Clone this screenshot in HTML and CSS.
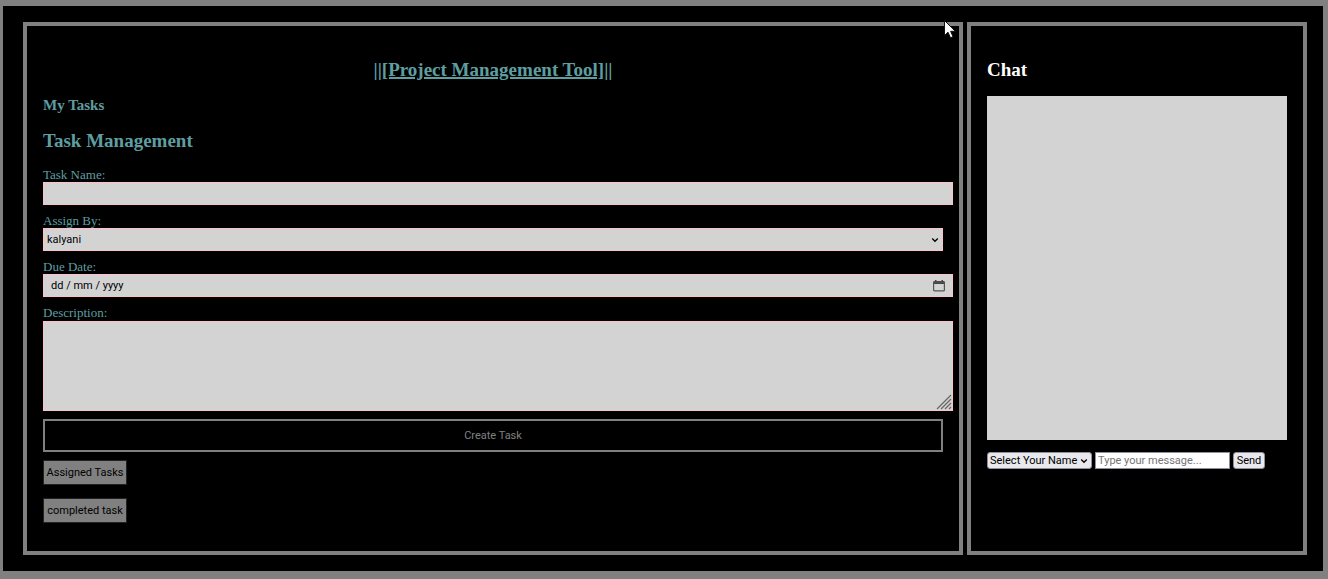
FILE: index.html
```html
<!DOCTYPE html>
<html lang="en-GB">
<head>
<meta charset="utf-8">
<title>Project Management Tool</title>
<link rel="stylesheet" href="styles.css">
</head>
<body>
<div class="app">
  <main class="panel">
    <h1 class="title">||<a href="#">[Project Management Tool]</a>||</h1>
    <h3 class="subtitle">My Tasks</h3>
    <h2 class="heading">Task Management</h2>
    <form class="task-form">
      <div class="field">
        <label for="task-name">Task Name:</label>
        <input class="control wide" id="task-name" type="text">
      </div>
      <div class="field">
        <label for="assign-by">Assign By:</label>
        <div class="control-wrap">
          <select class="control" id="assign-by"><option>kalyani</option></select>
          <svg class="chevron" viewBox="0 0 8 8" aria-hidden="true"><path d="M1.2 2.5 4 5.3 6.8 2.5"/></svg>
        </div>
      </div>
      <div class="field">
        <label for="due-date">Due Date:</label>
        <div class="control-wrap wide">
          <input class="control date" id="due-date" type="text" value="dd / mm / yyyy">
          <button class="calendar" type="button" aria-label="Open calendar">
            <svg viewBox="0 0 12 12"><path class="fill" d="M2 0h1.500v1h5V0H10v1h.5A1.500 1.500 0 0 1 12 2.500V4H0V2.500A1.500 1.500 0 0 1 1.500 1H2z"/><rect class="line" x=".6" y="2" width="10.800" height="8.900" rx="1"/></svg>
          </button>
        </div>
      </div>
      <div class="field description">
        <label for="description">Description:</label>
        <div class="control-wrap wide">
          <textarea class="control area" id="description"></textarea>
          <svg class="grip" viewBox="0 0 16 16" aria-hidden="true"><path d="M1 15 15 1M5 15 15 5M9 15l6-6M13 15l2-2"/></svg>
        </div>
      </div>
      <button class="create" type="button">Create Task</button>
    </form>
    <div class="links">
      <button class="gray-button" type="button">Assigned Tasks</button>
      <button class="gray-button" type="button">completed task</button>
    </div>
  </main>
  <aside class="panel chat">
    <h2 class="heading">Chat</h2>
    <div class="messages"></div>
    <form class="composer">
      <div class="control-wrap name">
        <select class="mini" aria-label="Your name"><option>Select Your Name</option></select>
        <svg class="chevron" viewBox="0 0 8 8" aria-hidden="true"><path d="M1.200 2.500 4 5.300 6.800 2.500"/></svg>
      </div>
      <input class="message" type="text" placeholder="Type your message..." aria-label="Message">
      <button class="mini send" type="button">Send</button>
    </form>
  </aside>
</div>
<svg class="cursor" viewBox="0 0 12 19" aria-hidden="true"><path d="M.5.5v15l3.500-3.300 2.500 5.600 2.500-1.100-2.400-5.400h4.700z"/></svg>
</body>
</html>
```
FILE: styles.css
```css
* { box-sizing: border-box; }
body {
  margin: 0;
  padding: 6px 5px 8px 3px;
  min-height: 100vh;
  display: flex;
  background: #808080;
  color: #5f9ea0;
  font-family: "Liberation Serif", serif;
  font-size: 13px;
  line-height: 15px;
}
h1, h2, h3 { margin: 0; }
button, input, select, textarea {
  margin: 0;
  font-family: Roboto, sans-serif;
  font-size: 11px;
  line-height: 15px;
}
.app {
  flex: 1;
  display: grid;
  grid-template-columns: minmax(0, 1fr) 340px;
  gap: 4px;
  padding: 16px 16px 16px 20px;
  background: #000;
}
.panel { border: 4px solid #808080; padding: 33px 16px 28px; }
.title { margin-bottom: 15px; text-align: center; font-size: 19px; line-height: 22px; }
.title a { color: inherit; text-decoration-thickness: 2px; }
.subtitle { margin-bottom: 16px; font-size: 15px; line-height: 18px; }
.heading { margin-bottom: 15px; font-size: 19px; line-height: 22px; }
.task-form { display: flex; flex-direction: column; gap: 8px; }
.field { display: flex; flex-direction: column; }
.description { gap: 1px; }
.control-wrap { position: relative; display: flex; }
.wide { width: calc(100% + 10px); }
.control {
  flex: 1;
  min-width: 0;
  min-height: 23px;
  padding: 3px;
  border: 1px solid #ffc0cb;
  border-radius: 0;
  background: #d3d3d3;
  color: #000;
  appearance: none;
}
.date { padding-left: 7px; }
.area { height: 90px; resize: none; }
.chevron {
  position: absolute;
  right: 4px;
  top: calc(50% - 4px);
  width: 8px;
  height: 8px;
  fill: none;
  stroke: #000;
  stroke-width: 1.3;
  pointer-events: none;
}
.calendar {
  position: absolute;
  right: 8px;
  top: 6px;
  width: 12px;
  height: 12px;
  padding: 0;
  border: 0;
  background: none;
}
.calendar svg { display: block; width: 12px; height: 12px; }
.fill { fill: #444; }
.line { fill: none; stroke: #555; stroke-width: 1.2; }
.grip {
  position: absolute;
  right: 1px;
  bottom: 1px;
  width: 16px;
  height: 16px;
  stroke: #666;
  stroke-width: 1.2;
  pointer-events: none;
}
.create { height: 33px; border: 2px solid #808080; background: #000; color: #808080; }
.links { display: flex; flex-direction: column; align-items: flex-start; gap: 13px; margin-top: 8px; }
.gray-button {
  height: 25px;
  width: 84px;
  padding: 0;
  border: 1px solid #222;
  background: #808080;
  color: #000;
  white-space: nowrap;
}
.chat .heading { color: #fff; }
.messages { height: 344px; background: #d3d3d3; }
.composer { display: flex; gap: 3px; margin-top: 12px; }
.name { width: 105px; }
.mini {
  height: 17px;
  width: 100%;
  padding: 0 2px;
  border: 1px solid #8f8f9d;
  border-radius: 3px;
  background: #e9e9ed;
  color: #000;
  line-height: 15px;
  appearance: none;
}
.message {
  width: 135px;
  height: 17px;
  padding: 0 2px;
  border: 1px solid #8f8f9d;
  background: #fff;
  color: #000;
}
.message::placeholder { color: #757575; }
.send { width: 32px; padding: 0; }
.cursor {
  position: absolute;
  left: 944px;
  top: 20px;
  width: 12px;
  height: 19px;
  fill: #fff;
  stroke: #111;
  pointer-events: none;
}
```
